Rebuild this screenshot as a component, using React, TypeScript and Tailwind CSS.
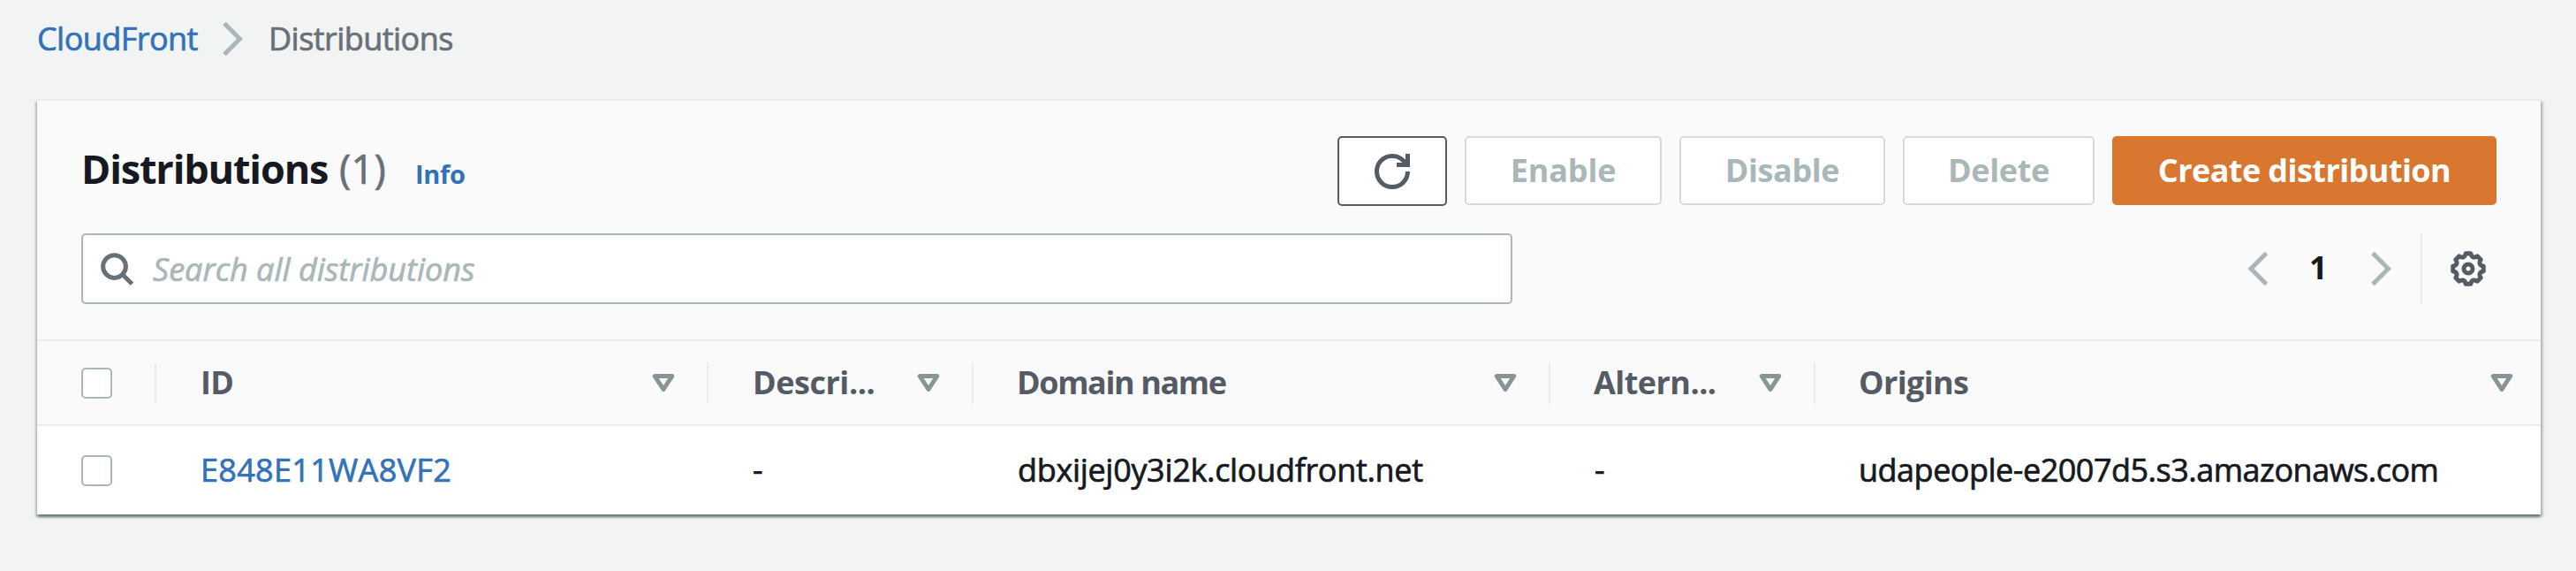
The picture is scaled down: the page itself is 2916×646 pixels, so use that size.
import type { ReactNode } from 'react';

function Chevron({ direction }: { direction: 'left' | 'right' }) {
  return (
    <svg viewBox="0 0 16 16" className="h-10 w-10 shrink-0 fill-none stroke-[#aab7b8] stroke-2">
      <path d={direction === 'right' ? 'M4 1l7 7-7 7' : 'M11 1L4 8l7 7'} />
    </svg>
  );
}

function RefreshIcon() {
  return (
    <svg viewBox="0 0 16 16" className="h-10 w-10 fill-none stroke-[#545b64] stroke-2">
      <path d="M10 5h5V0" />
      <path d="M15 8a6.957 6.957 0 0 1-7 7 6.957 6.957 0 0 1-7-7 6.957 6.957 0 0 1 7-7 6.87 6.87 0 0 1 6.3 4" />
    </svg>
  );
}

function SearchIcon() {
  return (
    <svg viewBox="0 0 16 16" className="h-10 w-10 shrink-0 fill-none stroke-[#687078] stroke-2">
      <circle cx="7" cy="7" r="5.15" />
      <path d="M10.6 10.6l4.4 4.3" />
    </svg>
  );
}

function polar(radius: number, degrees: number) {
  const a = ((degrees - 90) * Math.PI) / 180;
  return `${(8 + radius * Math.cos(a)).toFixed(2)} ${(8 + radius * Math.sin(a)).toFixed(2)}`;
}

const gearPath =
  [0, 45, 90, 135, 180, 225, 270, 315]
    .map((a, i) => `${i ? 'L' : 'M'}${polar(7, a - 9)}L${polar(7, a + 9)}Q${polar(4.6, a + 22.5)} ${polar(7, a + 36)}`)
    .join('') + 'Z';

function GearIcon() {
  return (
    <svg viewBox="0 0 16 16" className="h-10 w-10 shrink-0 fill-none stroke-[#545b64] stroke-2">
      <path d={gearPath} strokeLinejoin="round" />
      <circle cx="8" cy="8" r="2" />
    </svg>
  );
}

function SortIcon() {
  return (
    <svg viewBox="0 0 26 20" className="h-5 w-[26px] shrink-0 fill-none stroke-[#879596] stroke-[5]">
      <path d="M3.2 2.5H22.8L13 17.5Z" strokeLinejoin="round" />
    </svg>
  );
}

function DisabledButton({ className, children }: { className: string; children: ReactNode }) {
  return (
    <button
      disabled
      className={`flex h-[78px] items-center justify-center rounded-[5px] border-2 border-[#d5dbdb] bg-white font-bold text-[#aab7b8] ${className}`}
    >
      {children}
    </button>
  );
}

function Checkbox() {
  return <span className="block h-[35px] w-[35px] rounded-[5px] border-2 border-[#aab7b8] bg-white" />;
}

function HeaderCell({ className, children, last }: { className: string; children: ReactNode; last?: boolean }) {
  return (
    <div
      className={`flex h-[47px] items-center justify-between pl-[49px] ${last ? 'pr-[31px]' : 'border-r-2 border-[#eaeded] pr-9'}`}
    >
      <span className={className}>{children}</span>
      <SortIcon />
    </div>
  );
}

const columns = 'grid grid-cols-[135px_625px_300px_653px_300px_821px] items-center';

export default function App() {
  return (
    <div className="h-[646px] w-[2916px] overflow-hidden bg-[#f2f3f3] font-['Open_Sans',sans-serif] text-[36px] leading-[48px] font-medium whitespace-nowrap text-[#16191f]">
      <nav className="flex h-28 items-start pl-[42px] [-webkit-text-stroke:0.7px]">
        <a className="mt-5 w-[202px] tracking-[-0.56px] text-[#3272b8]">CloudFront</a>
        <span className="mt-6">
          <Chevron direction="right" />
        </span>
        <span className="mt-5 ml-5 tracking-[-0.54px] text-[#687078]">Distributions</span>
      </nav>

      <main className="ml-[42px] w-[2834px] border-t-2 border-[#eaeded] bg-white shadow-[0_2.5px_2.5px_0_rgba(0,28,36,0.35),2.5px_2.5px_2.5px_0_rgba(0,28,36,0.18),-2.5px_2.5px_2.5px_0_rgba(0,28,36,0.18)]">
        <header className="h-[272px] border-b-2 border-[#eaeded] bg-[#fafafa] px-[50px] pt-10">
          <div className="flex h-[78px] items-start justify-between">
            <div className="flex items-baseline pt-[7px] text-[45px] leading-[60px]">
              <h2 className="w-[292px] font-bold tracking-[-1.15px]">Distributions</h2>
              <span className="w-[86px] tracking-[0.25px] text-[#687078] [-webkit-text-stroke:0.7px]">(1)</span>
              <a className="text-[29px] font-bold tracking-[-0.3px] text-[#3272b8]">Info</a>
            </div>
            <div className="flex items-start gap-5">
              <button className="flex h-[79px] w-[124px] items-center justify-center rounded-[5px] border-2 border-[#545b64] bg-white">
                <RefreshIcon />
              </button>
              <DisabledButton className="w-[223px] tracking-[-0.15px]">Enable</DisabledButton>
              <DisabledButton className="w-[233px] tracking-[-0.42px]">Disable</DisabledButton>
              <DisabledButton className="w-[217px] tracking-[-0.36px]">Delete</DisabledButton>
              <button className="flex h-[78px] w-[435px] items-center justify-center rounded-[5px] bg-[#d97731] font-bold tracking-[-0.57px] text-white">
                Create distribution
              </button>
            </div>
          </div>

          <div className="mt-8 flex h-20 items-center justify-between">
            <div className="flex h-20 w-[1620px] items-center rounded-[5px] border-2 border-[#aab7b8] bg-white pl-[18px]">
              <SearchIcon />
              <span className="mt-0.5 ml-[21px] text-[#aab7b8] italic [-webkit-text-stroke:0.7px]">
                Search all distributions
              </span>
            </div>
            <div className="flex h-20 items-center pr-3">
              <Chevron direction="left" />
              <span className="w-[98px] pb-0.5 pl-9 font-bold">1</span>
              <Chevron direction="right" />
              <span className="mr-8 ml-6 h-20 w-0.5 bg-[#eaeded]" />
              <GearIcon />
            </div>
          </div>
        </header>

        <section>
          <div className={`${columns} h-24 border-b-2 border-[#eaeded] bg-[#fafafa] font-bold text-[#545b64]`}>
            <div className="flex h-[47px] items-center border-r-2 border-[#eaeded] pl-[50px]">
              <Checkbox />
            </div>
            <HeaderCell className="pl-px tracking-[-0.62px]">ID</HeaderCell>
            <HeaderCell className="pl-px tracking-[-0.46px]">Descri...</HeaderCell>
            <HeaderCell className="tracking-[-1.4px]">Domain name</HeaderCell>
            <HeaderCell className="tracking-[-0.55px]">Altern...</HeaderCell>
            <HeaderCell className="tracking-[-0.66px]" last>
              Origins
            </HeaderCell>
          </div>
          <div className={`${columns} h-[100px] bg-white [-webkit-text-stroke:0.7px]`}>
            <div className="pl-[50px]">
              <Checkbox />
            </div>
            <a className="pl-[50px] tracking-[0.3px] text-[#3272b8]">E848E11WA8VF2</a>
            <span className="pl-[50px]">-</span>
            <span className="pl-[50px] tracking-[-0.32px]">dbxijej0y3i2k.cloudfront.net</span>
            <span className="pl-[50px]">-</span>
            <span className="pl-[49px] tracking-[-0.5px]">udapeople-e2007d5.s3.amazonaws.com</span>
          </div>
        </section>
      </main>
    </div>
  );
}
